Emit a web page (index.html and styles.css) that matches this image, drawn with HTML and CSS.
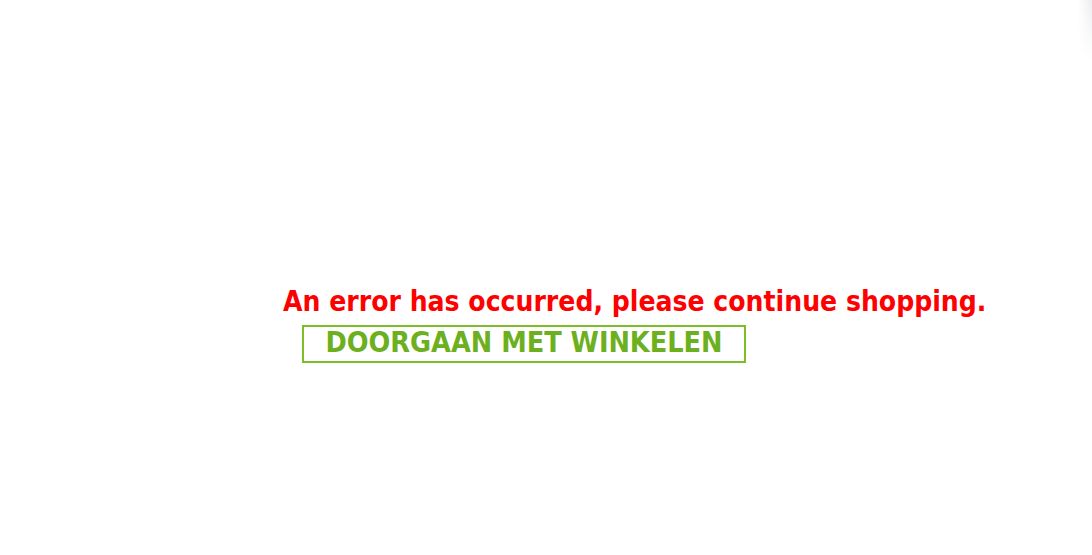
FILE: index.html
```html
<!DOCTYPE html>
<html>
<head>
<meta charset="utf-8">
<link rel="stylesheet" href="styles.css">
</head>
<body>
<div class="page">
  <div class="error-box">
    <p class="error-msg">An error has occurred, please continue shopping.</p>
    <a class="continue-btn" href="#">DOORGAAN MET WINKELEN</a>
  </div>
</div>
<div class="corner-shade"></div>
</body>
</html>
```
FILE: styles.css
```css
html, body {
  margin: 0;
  padding: 0;
  background: #ffffff;
}
.page {
  padding: 284px 0 0 283px;
  font-family: "DejaVu Sans Condensed", "DejaVu Sans", sans-serif;
  font-weight: bold;
}
.error-box {
  display: flex;
  flex-direction: column;
  align-items: flex-start;
}
.error-msg {
  margin: 0;
  color: #ff0000;
  font-size: 28px;
  line-height: 36px;
}
.continue-btn {
  margin: 5px 0 0 19px;
  display: block;
  width: 440px;
  height: 34px;
  border: 2px solid #7dbd2a;
  color: #6cb020;
  font-size: 28.5px;
  line-height: 32px;
  text-decoration: none;
  text-align: center;
}
.corner-shade {
  position: fixed;
  top: 0;
  right: 0;
  width: 14px;
  height: 60px;
  background: linear-gradient(to right, rgba(200,205,210,0), rgba(200,205,210,0.35));
  -webkit-mask-image: linear-gradient(to bottom, #000, transparent);
  mask-image: linear-gradient(to bottom, #000, transparent);
}
```
